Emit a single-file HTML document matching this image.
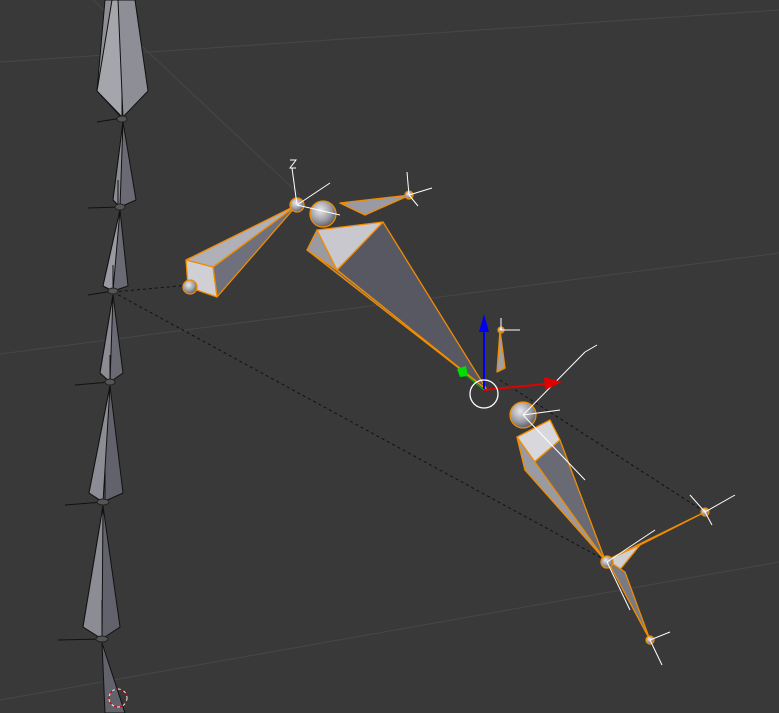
<!DOCTYPE html>
<html><head><meta charset="utf-8"><style>
html,body{margin:0;padding:0;background:#393939;width:779px;height:713px;overflow:hidden}
svg{display:block}
</style></head><body>
<svg width="779" height="713" viewBox="0 0 779 713" xmlns="http://www.w3.org/2000/svg">
<defs>
<radialGradient id="sph" cx="0.4" cy="0.35" r="0.7">
<stop offset="0" stop-color="#e8e8ec"/><stop offset="0.6" stop-color="#9a9aa2"/><stop offset="1" stop-color="#55555c"/>
</radialGradient>
</defs>
<rect width="779" height="713" fill="#393939"/>
<g stroke="#474747" stroke-width="1" fill="none">
<line x1="0" y1="62" x2="779" y2="10"/>
<line x1="0" y1="354" x2="779" y2="253"/>
<line x1="0" y1="700" x2="779" y2="562"/>
<line x1="93" y1="0" x2="300" y2="195"/>
</g>
<g stroke="#111" stroke-width="1" stroke-dasharray="3,3" fill="none">
<line x1="113" y1="292" x2="190" y2="285"/>
<line x1="113" y1="292" x2="605" y2="560"/>
<line x1="500" y1="380" x2="705" y2="512"/>
</g>
<g stroke="#111" stroke-width="1" stroke-linejoin="round">
<polygon points="105,0 135,0 148,91 122,118 97,91" fill="#8e8e96"/>
<polygon points="112,0 118,0 123,118 97,91" fill="#a5a5ac"/>
<polygon points="123,122 136,200 120,207 113,200" fill="#6a6a74"/>
<polygon points="123,122 113,200 120,207" fill="#8c8c94"/>
<polygon points="120,210 128,286 113,291 103,286" fill="#6a6a74"/>
<polygon points="120,210 103,286 113,291" fill="#9a9aa2"/>
<polygon points="113,295 123,373 110,382 100,373" fill="#6a6a74"/>
<polygon points="113,295 100,373 110,382" fill="#8c8c94"/>
<polygon points="110,386 123,493 103,502 89,493" fill="#62626c"/>
<polygon points="110,386 89,493 103,502" fill="#8c8c94"/>
<polygon points="103,506 120,627 102,639 83,627" fill="#62626c"/>
<polygon points="103,506 83,627 102,639" fill="#8c8c94"/>
<polygon points="102,643 125,713 105,713" fill="#62626c"/>
</g>
<g stroke="#111" stroke-width="1" fill="none">
<path d="M122,118 L97,122 M120,207 L88,208 M113,291 L88,295 M110,382 L75,385 M103,502 L65,505 M102,639 L58,640 M122,118 V92 M118,205 V180 M113,290 V265 M110,380 V355 M105,500 V470 M102,637 V600"/>
</g>
<g fill="#555" stroke="#222"><ellipse cx="122" cy="119" rx="5" ry="3"/><ellipse cx="120" cy="207" rx="5" ry="3"/><ellipse cx="113" cy="291" rx="5" ry="3"/><ellipse cx="110" cy="382" rx="5" ry="3"/><ellipse cx="103" cy="502" rx="6" ry="3"/><ellipse cx="102" cy="639" rx="6" ry="3"/></g>
<circle cx="118" cy="698" r="9" fill="none" stroke="#eee" stroke-dasharray="3,3"/>
<circle cx="118" cy="698" r="9" fill="none" stroke="#c00" stroke-dasharray="3,3" stroke-dashoffset="3"/>
<g stroke="#f08c00" stroke-width="1.3" stroke-linejoin="round">
<polygon points="297,205 213,267 217,297" fill="#70707c"/>
<polygon points="297,205 186,260 213,267" fill="#b0b0b8"/>
<polygon points="186,260 213,267 217,297 188,287" fill="#cfcfd4"/>
<polygon points="383,222 337,270 487,390" fill="#585862"/>
<polygon points="307,250 337,270 487,390" fill="#6a6a74"/>
<polygon points="307,250 317,230 337,270" fill="#9a9aa2"/>
<polygon points="317,230 383,222 337,270" fill="#c8c8ce"/>
<polygon points="340,203 410,195 365,215" fill="#9a9aa4"/>
<polygon points="500,330 505,368 497,372" fill="#a0a0a8"/>
<polygon points="517,437 550,420 560,440 525,470" fill="#d8d8dc"/>
<polygon points="525,470 560,440 605,560" fill="#6a6a74"/>
<polygon points="517,437 525,470 605,560" fill="#9a9aa2"/>
<polygon points="607,560 705,512 640,545" fill="#a0a0a8"/>
<polygon points="607,560 640,545 618,572" fill="#d0d0d4"/>
<polygon points="607,560 625,572 650,640" fill="#7a7a84"/>
</g>
<g stroke="#f08c00" stroke-width="1.3" fill="url(#sph)">
<circle cx="297" cy="205" r="7"/><circle cx="190" cy="287" r="7"/><circle cx="323" cy="214" r="13"/>
<circle cx="409" cy="195" r="4"/><circle cx="523" cy="415" r="13"/><circle cx="607" cy="562" r="6"/>
<circle cx="705" cy="512" r="4"/><circle cx="650" cy="640" r="4"/><circle cx="501" cy="330" r="3"/>
</g>
<g stroke="#fff" stroke-width="1" fill="none">
<path d="M297,205 L292,168 M297,205 L330,183 M297,205 L340,215"/>
<path d="M409,195 L407,172 M409,195 L432,188 M409,195 L418,206"/>
<path d="M523,415 L585,352 M523,415 L585,480 M523,415 L560,410"/>
<path d="M705,512 L735,495 M705,512 L690,495 M705,512 L712,525"/>
<path d="M607,562 L655,530 M607,562 L630,610 M650,640 L662,665 M650,640 L670,632"/>
<path d="M501,330 L501,318 M501,330 L520,330"/>
<path d="M585,352 L597,345 M290,160 h6 l-6,8 h6"/>
</g>
<line x1="484" y1="390" x2="484" y2="330" stroke="#0000ee" stroke-width="2"/>
<polygon points="484,314 479,332 489,332" fill="#0000ee"/>
<line x1="484" y1="390" x2="545" y2="384" stroke="#e00000" stroke-width="2"/>
<polygon points="562,382 544,377 545,390" fill="#e00000"/>
<line x1="484" y1="390" x2="462" y2="372" stroke="#00c000" stroke-width="1"/>
<polygon points="457,369 466,366 468,376 460,377" fill="#00dd00"/>
<circle cx="484" cy="394" r="14" fill="none" stroke="#fff" stroke-width="1.3"/>
</svg>
</body></html>
